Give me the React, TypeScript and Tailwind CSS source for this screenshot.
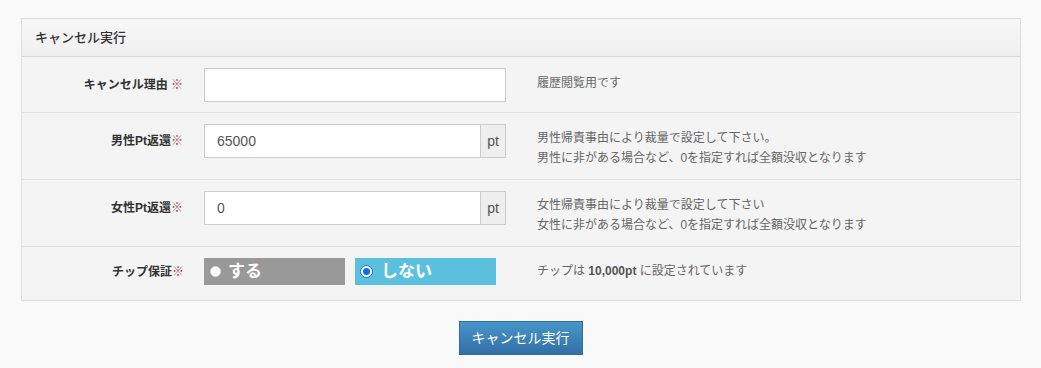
import React from "react";

const font = { fontFamily: '"Liberation Sans", "Noto Sans CJK JP", sans-serif' };

function Label({ text, space }: { text: string; space?: boolean }) {
	return (
		<div className="w-[162px] shrink-0 pr-[1px] text-right text-[12px] font-bold leading-[34px] text-[#333]">
			{text}
			{space ? " " : ""}
			<span className="text-[#a94442]">※</span>
		</div>
	);
}

function PtInput({ value }: { value: string }) {
	return (
		<div className="flex h-[34px] w-[302px] shrink-0">
			<input
				readOnly
				value={value}
				className="h-full w-[277px] border border-[#ccc] bg-white px-[12px] text-[14px] text-[#555] outline-none"
				style={font}
			/>
			<div className="flex h-full w-[25px] items-center justify-center border border-l-0 border-[#ccc] bg-[#eee] text-[14px] text-[#555]">
				pt
			</div>
		</div>
	);
}

export default function App() {
	return (
		<div className="min-h-[368px] bg-[#f9f9f9] pt-[18px]" style={font}>
			<div className="ml-[21px] w-[1000px] border border-[#ddd] bg-[#f4f4f4]">
				<div className="flex h-[38px] items-center border-b border-[#d8d8d8] bg-gradient-to-b from-[#f8f8f8] to-[#efefef] pl-[13px] text-[13px] font-medium text-[#333]">
					キャンセル実行
				</div>

				<div className="flex h-[56px] items-start border-b border-[#e0e0e0] pt-[11px]">
					<Label text="キャンセル理由" space />
					<input
						readOnly
						className="ml-[20px] h-[34px] w-[302px] shrink-0 border border-[#ccc] bg-white outline-none"
					/>
					<div className="ml-[31px] text-[12px] leading-[30px] text-[#666]">履歴閲覧用です</div>
				</div>

				<div className="flex h-[67px] items-start border-b border-[#e0e0e0] pt-[11px]">
					<Label text="男性Pt返還" />
					<div className="ml-[20px]">
						<PtInput value="65000" />
					</div>
					<div className="ml-[31px] pt-[4px] text-[12px] leading-[20px] text-[#666]">
						<div>男性帰責事由により裁量で設定して下さい。</div>
						<div>男性に非がある場合など、0を指定すれば全額没収となります</div>
					</div>
				</div>

				<div className="flex h-[67px] items-start border-b border-[#e0e0e0] pt-[11px]">
					<Label text="女性Pt返還" />
					<div className="ml-[20px]">
						<PtInput value="0" />
					</div>
					<div className="ml-[31px] pt-[4px] text-[12px] leading-[20px] text-[#666]">
						<div>女性帰責事由により裁量で設定して下さい</div>
						<div>女性に非がある場合など、0を指定すれば全額没収となります</div>
					</div>
				</div>

				<div className="flex h-[53px] items-start pt-[11px]">
					<div className="flex h-[27px] w-[162px] shrink-0 items-center justify-end text-right text-[12px] font-bold text-[#333]">
						チップ保証<span className="text-[#a94442]">※</span>
					</div>
					<div className="ml-[20px] flex h-[27px] w-[141px] items-center bg-[#999] pl-[6px] text-[17px] font-bold text-white">
						<span className="mr-[7px] h-[11px] w-[11px] rounded-full border border-[#ddd] bg-white" />
						する
					</div>
					<div className="ml-[10px] flex h-[27px] w-[141px] items-center bg-[#5bc0de] pl-[5px] text-[17px] font-bold text-white">
						<span className="mr-[8px] flex h-[13px] w-[13px] items-center justify-center rounded-full border border-[#0a6cf0] bg-white">
							<span className="h-[7px] w-[7px] rounded-full bg-[#0a6cf0]" />
						</span>
						しない
					</div>
					<div className="ml-[41px] text-[12px] leading-[27px] text-[#666]">
						チップは <span className="font-bold text-[#555]">10,000pt</span> に設定されています
					</div>
				</div>
			</div>

			<div className="flex justify-center pt-[20px]">
				<button
					className="h-[34px] w-[124px] border border-[#2e6da4] bg-gradient-to-b from-[#4796c9] to-[#3370a6] text-[14px] text-white"
					style={font}
				>
					キャンセル実行
				</button>
			</div>
		</div>
	);
}
